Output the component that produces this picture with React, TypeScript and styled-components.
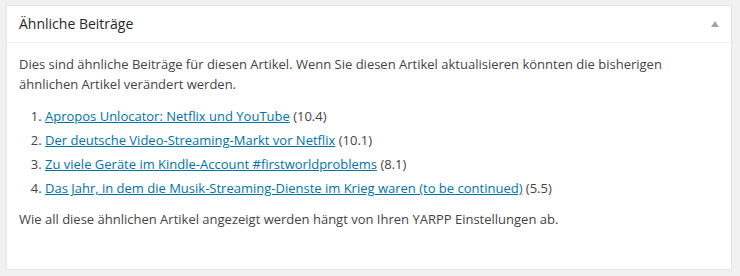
import styled, { createGlobalStyle } from 'styled-components';

interface Related {
  title: string;
  score: string;
}

const related: Related[] = [
  { title: 'Apropos Unlocator: Netflix und YouTube', score: '10.4' },
  { title: 'Der deutsche Video-Streaming-Markt vor Netflix', score: '10.1' },
  { title: 'Zu viele Geräte im Kindle-Account #firstworldproblems', score: '8.1' },
  { title: 'Das Jahr, in dem die Musik-Streaming-Dienste im Krieg waren (to be continued)', score: '5.5' },
];

const GlobalStyle = createGlobalStyle`
  body {
    margin: 0;
    background: #f1f1f1;
    font-family: "Open Sans", "Noto Sans", sans-serif;
    color: #444;
  }
`;

const Postbox = styled.div`
  box-sizing: border-box;
  width: 726px;
  height: 265px;
  margin: 5px 0 0 6px;
  background: #fff;
  border: 1px solid #e5e5e5;
  box-shadow: 0 1px 1px rgba(0, 0, 0, 0.04);
`;

const Header = styled.div`
  display: flex;
  align-items: center;
  justify-content: space-between;
  height: 36px;
  border-bottom: 1px solid #eee;
`;

const Title = styled.h2`
  margin: 0;
  padding: 0 12px;
  font-size: 14px;
  font-weight: 400;
  line-height: 36px;
  color: #23282d;
`;

const Toggle = styled.button`
  display: flex;
  align-items: center;
  justify-content: center;
  width: 33px;
  height: 36px;
  padding: 0;
  border: 0;
  background: none;
  color: #a0a5aa;
  cursor: pointer;
`;

const Inside = styled.div`
  padding: 0 12px;
  font-size: 13px;
`;

const Text = styled.p<{ $top?: number }>`
  margin: ${p => p.$top ?? 11}px 0 0;
  line-height: 20px;
`;

const List = styled.ol`
  margin: 13px 0 12px;
  padding-left: 26px;
`;

const Item = styled.li`
  line-height: 18px;
  margin-bottom: 6px;

  &:last-child {
    margin-bottom: 0;
  }
`;

const Link = styled.a`
  color: #0073aa;
  text-decoration: underline;
`;

const App = () => (
  <>
    <GlobalStyle />
    <Postbox>
      <Header>
        <Title>Ähnliche Beiträge</Title>
        <Toggle aria-label="Bereich umschalten">
          <svg width="8" height="6" viewBox="0 0 8 6">
            <path d="M4 0 L8 6 L0 6 Z" fill="currentColor" />
          </svg>
        </Toggle>
      </Header>
      <Inside>
        <Text>
          Dies sind ähnliche Beiträge für diesen Artikel. Wenn Sie diesen Artikel aktualisieren könnten die bisherigen ähnlichen Artikel verändert werden.
        </Text>
        <List>
          {related.map(r => (
            <Item key={r.title}>
              <Link href="#">{r.title}</Link> ({r.score})
            </Item>
          ))}
        </List>
        <Text $top={0}>
          Wie all diese ähnlichen Artikel angezeigt werden hängt von Ihren YARPP Einstellungen ab.
        </Text>
      </Inside>
    </Postbox>
  </>
);

export default App;
